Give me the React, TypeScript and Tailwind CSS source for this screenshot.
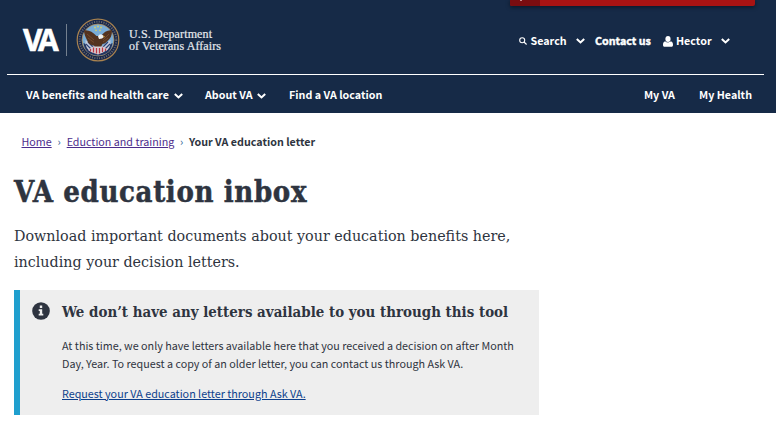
import type { ReactNode } from "react";

const sans = "font-['Noto_Sans_CJK_SC','Noto_Sans',sans-serif]";
const slabCondensed = "font-['DejaVu_Serif_Condensed','DejaVu_Serif',serif] [font-stretch:condensed]";
const slab = "font-['DejaVu_Serif',serif]";

function Chevron({ className = "" }: { className?: string }) {
  return (
    <svg viewBox="0 0 9 6" className={`h-[6px] w-[9px] shrink-0 ${className}`} fill="none" stroke="white" strokeWidth="2">
      <path d="M0.8 0.9 L4.5 4.4 L8.2 0.9" />
    </svg>
  );
}

function SearchIcon() {
  return (
    <svg viewBox="0 0 8 8" className="h-[8px] w-[8px] shrink-0" fill="none" stroke="white" strokeWidth="1.1">
      <circle cx="3.2" cy="3.2" r="2.5" />
      <path d="M5 5 L7.6 7.5" />
    </svg>
  );
}

function UserIcon() {
  return (
    <svg viewBox="0 0 10 11" className="h-[11px] w-[10px] shrink-0" fill="white">
      <ellipse cx="5" cy="3" rx="2.6" ry="3" />
      <path d="M2.2 5.2 C3.5 6.8 6.5 6.8 7.8 5.2 C9.4 5.5 10 6.8 10 8.8 C10 10.2 9.4 10.8 8.4 10.8 H1.6 C0.6 10.8 0 10.2 0 8.8 C0 6.8 0.6 5.5 2.2 5.2 Z" />
    </svg>
  );
}

function Seal() {
  return (
    <svg viewBox="0 0 44 44" className="h-[44px] w-[44px] shrink-0">
      <circle cx="22" cy="22" r="20.8" fill="#17264a" stroke="#a8824f" strokeWidth="1.2" />
      <circle cx="22" cy="22" r="18.300" fill="none" stroke="#a49a86" strokeWidth="2" strokeDasharray="1.1 1.3" opacity="0.55" />
      <circle cx="22" cy="22" r="16" fill="#79acd6" stroke="#b08b54" strokeWidth="0.8" />
      <path d="M7.500 25 Q22 33 36.500 25 Q35 37 22 37.600 Q9 37 7.500 25Z" fill="#243661" />
      <g fill="#d8cf6a">
        <circle cx="19" cy="9.500" r="0.9" />
        <circle cx="22" cy="8.500" r="0.9" />
        <circle cx="25" cy="9.500" r="0.9" />
        <circle cx="20" cy="12.300" r="0.9" />
        <circle cx="24" cy="12.300" r="0.9" />
      </g>
      <path d="M9.500 22 L19 29 L14 33 Q9 30 9.500 22Z" fill="#c9cddb" />
      <path d="M34.500 22 L25 29 L30 33 Q35 30 34.500 22Z" fill="#c9cddb" />
      <path d="M10 26 L17 33 M12 24 L19 31 M34 26 L27 33 M32 24 L25 31" stroke="#2d4478" strokeWidth="1.2" />
      <path d="M8 12.500 C12 11.500 17 14 20.500 18 L25 18 C28 14 32 11.500 36 12.500 C36 17.500 34.500 20.500 32 22.500 C30 25 28 26 26.500 26 L24 31 L20 31 L18 27.500 C14.500 27.500 12 25 11 22 C9.500 19 8 16 8 12.500Z" fill="#54331f" />
      <path d="M11 16 L18 22 M12 20 L18 24.500 M33 16 L27 22 M32 20 L27 24" stroke="#7b5130" strokeWidth="0.8" />
      <path d="M22 18.500 Q23 16 25.500 16.400 Q28 17 27.600 19.200 L26 20.500 L23 21Z" fill="#f0f0ef" />
      <path d="M27.300 17.400 L29.200 18.900 L27.300 19.300Z" fill="#e0ac3d" />
      <path d="M12 32 L17 28.500 H27 L32 31.500 L27 34.500 L22 36.500 L16 34.500Z" fill="#d9cfd6" />
      <path d="M14.500 31 V33.500 M17.500 29.500 V34.500 M20.500 30 V35.500 M23.500 30 V35.500 M26.500 29.500 V34 M29.500 30.500 V33" stroke="#bc3944" strokeWidth="1.3" />
    </svg>
  );
}

function Label({ children, className = "" }: { children: ReactNode; className?: string }) {
  return <span className={`whitespace-nowrap text-[10.730px] leading-[18px] font-bold text-white ${className}`}>{children}</span>;
}

export default function App() {
  return (
    <div className={`h-[447px] w-[776px] overflow-hidden bg-white text-[#2e3440] ${sans}`}>
      <header className="relative h-[113px] bg-[#162a47]">
        <div className="absolute top-0 left-[510px] flex h-[6px] w-[245px] overflow-hidden rounded-b-[2px] bg-[#a91313] shadow-[0_1px_4px_rgba(0,0,0,0.5)]">
          <div className="h-full w-[30px] bg-[#7b0d10] pl-[10px]">
            <div className="h-px w-[2px] bg-[#c58a8b]" />
          </div>
        </div>
        <div className="mr-3 ml-[7px] flex h-[75px] border-b border-white pt-[18px]">
          <span className="mt-[6px] ml-[16px] w-[36px] text-[30px] leading-[32px] font-bold tracking-[-4.500px] whitespace-nowrap text-white [-webkit-text-stroke:0.6px_white] font-['Open_Sans',sans-serif]">VA</span>
          <span className="mt-[6px] ml-[7px] h-[32px] w-px bg-[#74808f]" />
          <span className="ml-[9px]"><Seal /></span>
          <div className="mt-[10px] ml-[9px] w-[100px] text-[12px] leading-[12px] whitespace-nowrap text-[#e8ebef] [-webkit-text-stroke:0.2px_#e8ebef] font-['Liberation_Serif',serif]">
            <div className="tracking-[0.150px]">U.S. Department</div>
            <div className="tracking-[0.100px]">of Veterans Affairs</div>
          </div>
          <div className="mt-[14px] ml-auto flex h-[18px] w-[245px] items-center">
            <SearchIcon />
            <Label className="ml-[3.500px] w-[45px]">Search</Label>
            <Chevron />
            <Label className="ml-[10.500px] w-[68px] [-webkit-text-stroke:0.4px_white]">Contact us</Label>
            <UserIcon />
            <Label className="ml-[3px] w-[44.500px]">Hector</Label>
            <Chevron />
          </div>
        </div>
        <nav className="flex items-center pt-[11px] pr-[24px] pl-[26px]">
          <Label className="w-[147.500px]">VA benefits and health care</Label>
          <Chevron className="mt-[2px]" />
          <Label className="ml-[22.500px] w-[51.500px]">About VA</Label>
          <Chevron className="mt-[2px]" />
          <Label className="ml-[23.500px]">Find a VA location</Label>
          <Label className="ml-auto">My VA</Label>
          <Label className="ml-[24px]">My Health</Label>
        </nav>
      </header>

      <nav className="flex pt-[20px] pl-[21.500px] text-[10.730px] leading-[18px] whitespace-nowrap">
        <a className="text-[#4c2c8c] underline">Home</a>
        <span className="w-[15px] text-center text-[#315b93]">›</span>
        <a className="text-[#4c2c8c] underline">Eduction and training</a>
        <span className="w-[14.500px] text-center text-[#315b93]">›</span>
        <span className="font-bold">Your VA education letter</span>
      </nav>

      <main className="pl-[14px]">
        <h1 className={`pt-[21px] text-[29px] leading-[40px] font-bold tracking-[0.650px] whitespace-nowrap [-webkit-text-stroke:0.5px_#2e3440] ${slabCondensed}`}>VA education inbox</h1>
        <p className={`mt-[11px] text-[14.300px] leading-[26px] whitespace-nowrap ${slab}`}>
          Download important documents about your education benefits here,
          <br />
          including your decision letters.
        </p>
        <section className="mt-[15px] flex h-[125px] w-[525px] border-l-6 border-[#1f9fce] bg-[#eeeeee] pt-[12px] pl-[12px]">
          <svg viewBox="0 0 18 18" className="h-[18px] w-[18px] shrink-0">
            <circle cx="9" cy="9" r="8.800" fill="#2e3440" />
            <path d="M7.800 3.600 H10.200 V6 H7.800Z M6.700 7.300 H10.200 V11.800 H11.300 V13.600 H6.700 V11.800 H7.800 V9 H6.700Z" fill="#eeeeee" />
          </svg>
          <div className="ml-[12px] whitespace-nowrap">
            <h2 className={`text-[14.900px] leading-[20px] font-bold tracking-[0.020px] ${slabCondensed}`}>We don’t have any letters available to you through this tool</h2>
            <p className="mt-[15px] text-[10.750px] leading-[18px]">
              At this time, we only have letters available here that you received a decision on after Month
              <br />
              Day, Year. To request a copy of an older letter, you can contact us through Ask VA.
            </p>
            <p className="mt-[12px] text-[10.750px] leading-[18px]">
              <a className="text-[#0c3f8c] underline">Request your VA education letter through Ask VA.</a>
            </p>
          </div>
        </section>
      </main>
    </div>
  );
}
